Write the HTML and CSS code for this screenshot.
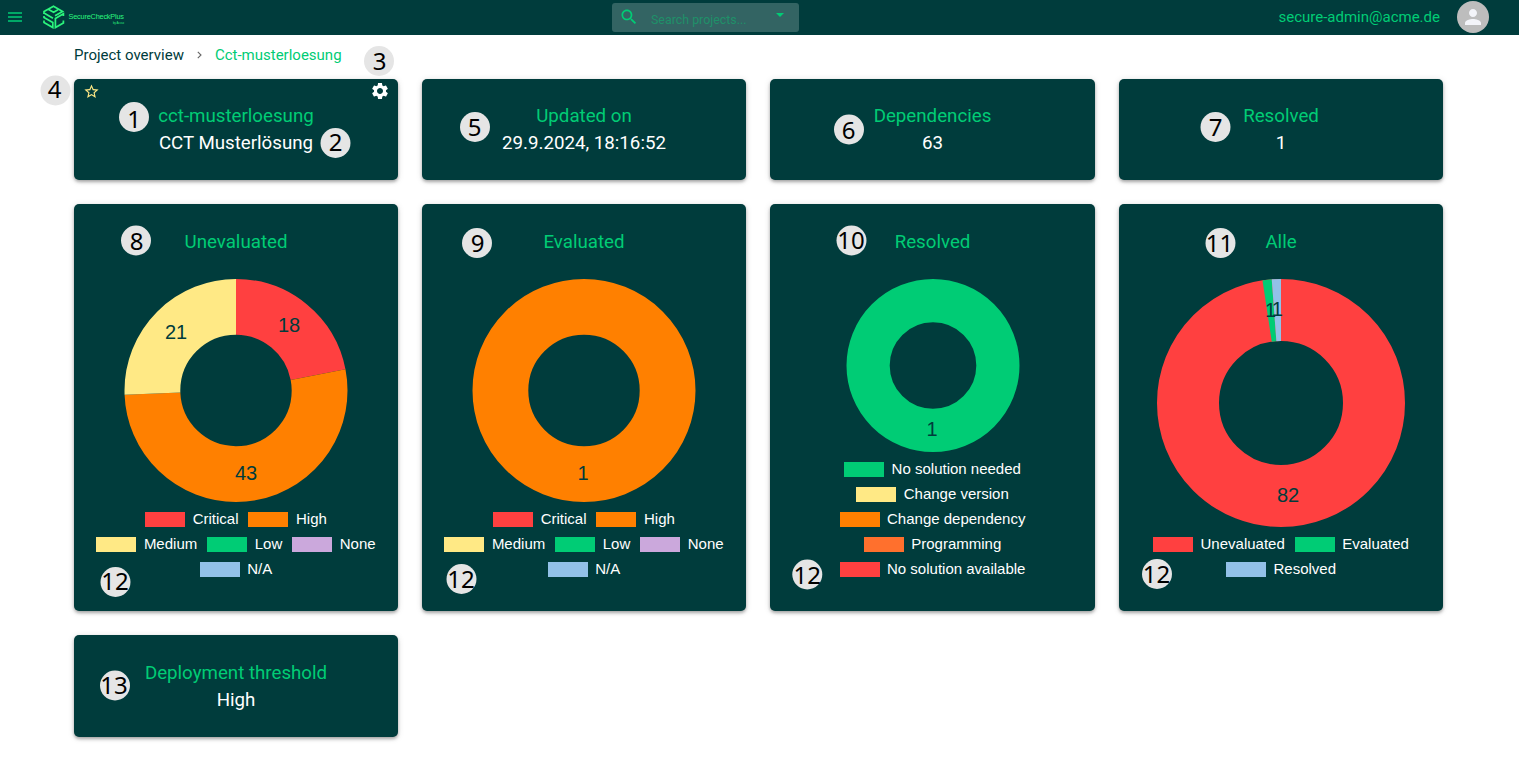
FILE: index.html
```
<!DOCTYPE html>
<html lang="en">
<head>
<meta charset="utf-8">
<title>SecureCheckPlus</title>
<link rel="stylesheet" href="styles.css">
</head>
<body>
<header class="topbar">
  <div class="brand">
    <svg class="menu" width="14" height="10" viewBox="0 0 14 10"><path d="M0 1h14M0 5h14M0 9h14" fill="none" stroke="#00cc75" stroke-width="1.3"/></svg>
    <svg class="logo" width="84" height="24" viewBox="0 0 84 24">
      <g fill="none" stroke="#2bf57c" stroke-width="1.7" stroke-linejoin="miter">
        <path d="M1 9V6.6L10.5 1.2 19.6 6.4 12 10.8M5.6 4.4l5 2.8 4.4-2.4"/>
        <path d="M1 8l9 5.2M1 11v1.6l8.8 5v5L1 17.6v-2.2"/>
        <path d="M20.4 11V8.8L12.4 13.4v9.2L20.4 18v-2.6"/>
      </g>
      <text class="logo-name" x="25.5" y="14.4" textLength="55.5">SecureCheckPlus</text>
      <text class="logo-by" x="70" y="19" textLength="11">by Accso</text>
    </svg>
  </div>
  <div class="search">
    <svg width="20" height="20" viewBox="0 0 24 24"><path fill="#00cc75" d="M15.5 14h-.79l-.28-.27C15.41 12.59 16 11.11 16 9.5 16 5.91 13.09 3 9.5 3S3 5.91 3 9.5 5.91 16 9.5 16c1.61 0 3.09-.59 4.23-1.57l.27.28v.79l5 4.99L20.49 19l-4.99-5zm-6 0C7.01 14 5 11.99 5 9.5S7.01 5 9.5 5 14 7.01 14 9.5 11.99 14 9.5 14z"/></svg>
    <span class="placeholder">Search projects...</span>
    <svg class="caret" width="8" height="4" viewBox="0 0 8 4"><path d="M0 0h8L4 4z" fill="#00cc75"/></svg>
  </div>
  <div class="user">
    <span class="mail">secure-admin@acme.de</span>
    <span class="avatar"><svg width="24" height="24" viewBox="0 0 24 24"><path fill="#f3f4f9" d="M12 12c2.21 0 4-1.79 4-4s-1.79-4-4-4-4 1.79-4 4 1.79 4 4 4zm0 2c-2.67 0-8 1.34-8 4v2h16v-2c0-2.66-5.33-4-8-4z"/></svg></span>
  </div>
</header>

<nav class="crumbs">
  <span class="crumb">Project overview</span>
  <svg width="5" height="8" viewBox="0 0 5 8"><path d="M.8.8L4 4 .8 7.2" fill="none" stroke="#666" stroke-width="1.1"/></svg>
  <span class="crumb current">Cct-musterloesung</span>
</nav>

<main class="grid">
  <section class="card project">
    <svg class="star" width="17" height="17" viewBox="0 0 24 24"><path fill="#ffe985" d="M22 9.24l-7.19-.62L12 2 9.19 8.63 2 9.24l5.46 4.73L5.82 21 12 17.27 18.18 21l-1.63-7.03L22 9.24zM12 15.4l-3.76 2.27 1-4.28-3.32-2.88 4.38-.38L12 6.1l1.71 4.04 4.38.38-3.32 2.88 1 4.28L12 15.4z"/></svg>
    <svg class="gear" width="20" height="20" viewBox="0 0 24 24"><path fill="#fff" d="M19.14 12.94c.04-.3.06-.61.06-.94 0-.32-.02-.64-.07-.94l2.03-1.58c.18-.14.23-.41.12-.61l-1.92-3.32c-.12-.22-.37-.29-.59-.22l-2.39.96c-.5-.38-1.03-.7-1.62-.94l-.36-2.54c-.04-.24-.24-.41-.48-.41h-3.84c-.24 0-.43.17-.47.41l-.36 2.54c-.59.24-1.13.57-1.62.94l-2.39-.96c-.22-.08-.47 0-.59.22L2.74 8.87c-.12.21-.08.47.12.61l2.03 1.58c-.05.3-.09.63-.09.94s.02.64.07.94l-2.03 1.58c-.18.14-.23.41-.12.61l1.92 3.32c.12.22.37.29.59.22l2.39-.96c.5.38 1.03.7 1.62.94l.36 2.54c.05.24.24.41.48.41h3.84c.24 0 .44-.17.47-.41l.36-2.54c.59-.24 1.13-.56 1.62-.94l2.39.96c.22.08.47 0 .59-.22l1.92-3.32c.12-.22.07-.47-.12-.61l-2.01-1.58zM12 15.6c-1.98 0-3.6-1.62-3.6-3.6s1.62-3.6 3.6-3.6 3.6 1.62 3.6 3.6-1.62 3.6-3.6 3.6z"/></svg>
    <h2>cct-musterloesung</h2><p>CCT Musterlösung</p>
  </section>
  <section class="card"><h2>Updated on</h2><p>29.9.2024, 18:16:52</p></section>
  <section class="card"><h2>Dependencies</h2><p>63</p></section>
  <section class="card"><h2>Resolved</h2><p>1</p></section>

  <section class="card chart">
    <h2>Unevaluated</h2>
    <svg width="276" height="223" viewBox="-138 -111.5 276 223">
      <g fill="none" stroke-width="55.8" transform="rotate(-90)">
        <circle r="83.6" pathLength="82" stroke="#ff4040" stroke-dasharray="18 64"/>
        <circle r="83.6" pathLength="82" stroke="#ff8000" stroke-dasharray="43 39" stroke-dashoffset="-18"/>
        <circle r="83.6" pathLength="82" stroke="#ffe985" stroke-dasharray="21 61" stroke-dashoffset="-61"/>
      </g>
      <text class="value" x="53" y="-58.5">18</text><text class="value" x="10" y="89.5">43</text><text class="value" x="-60" y="-51.5">21</text>
    </svg>
    <div class="legend">
      <div class="row"><span class="key critical">Critical</span><span class="key high">High</span></div>
      <div class="row"><span class="key medium">Medium</span><span class="key low">Low</span><span class="key none">None</span></div>
      <div class="row"><span class="key na">N/A</span></div>
    </div>
  </section>
  <section class="card chart">
    <h2>Evaluated</h2>
    <svg width="276" height="223" viewBox="-138 -111.5 276 223">
      <circle r="83.6" fill="none" stroke-width="55.8" stroke="#ff8000"/>
      <text class="value" x="-1" y="89.5">1</text>
    </svg>
    <div class="legend">
      <div class="row"><span class="key critical">Critical</span><span class="key high">High</span></div>
      <div class="row"><span class="key medium">Medium</span><span class="key low">Low</span><span class="key none">None</span></div>
      <div class="row"><span class="key na">N/A</span></div>
    </div>
  </section>
  <section class="card chart">
    <h2>Resolved</h2>
    <svg width="276" height="173" viewBox="-138 -86.5 276 173">
      <circle r="64.9" fill="none" stroke-width="43.2" stroke="#00cc75"/>
      <text class="value" x="-1" y="70.5">1</text>
    </svg>
    <div class="legend">
      <div class="row"><span class="key low">No solution needed</span></div>
      <div class="row"><span class="key medium">Change version</span></div>
      <div class="row"><span class="key high">Change dependency</span></div>
      <div class="row"><span class="key programming">Programming</span></div>
      <div class="row"><span class="key critical">No solution available</span></div>
    </div>
  </section>
  <section class="card chart">
    <h2>Alle</h2>
    <svg width="276" height="248" viewBox="-138 -124 276 248">
      <circle r="93" fill="none" stroke="#ff4040" stroke-width="62"/>
      <path d="M-18.48-122.61A124 124 0 0 1-9.27-123.65L-4.63-61.83A62 62 0 0 0-9.24-61.31z" fill="#00cc75"/>
      <path d="M-9.27-123.65A124 124 0 0 1 0-124V-62A62 62 0 0 0-4.63-61.83z" fill="#92c1e8"/>
      <text class="value" x="7" y="99">82</text><text class="value" x="-10.5" y="-86">1</text><text class="value" x="-3.8" y="-87">1</text>
    </svg>
    <div class="legend">
      <div class="row"><span class="key critical">Unevaluated</span><span class="key low">Evaluated</span></div>
      <div class="row"><span class="key na">Resolved</span></div>
    </div>
  </section>

  <section class="card threshold"><h2>Deployment threshold</h2><p>High</p></section>
</main>

<svg class="markers" width="1519" height="781" viewBox="0 0 1519 781">
  <circle cx="134" cy="117" r="15"/><text x="134" y="128.2">1</text>
  <circle cx="335.5" cy="143" r="15"/><text x="335.5" y="151.2">2</text>
  <circle cx="379" cy="61" r="15"/><text x="379.5" y="70.2">3</text>
  <circle cx="55.5" cy="90.5" r="15"/><text x="54.5" y="98">4</text>
  <circle cx="475" cy="127" r="15"/><text x="474.5" y="135.7">5</text>
  <circle cx="849" cy="129.5" r="15"/><text x="848.5" y="139">6</text>
  <circle cx="1215.5" cy="127" r="15"/><text x="1215.5" y="136">7</text>
  <circle cx="136" cy="240.5" r="15"/><text x="136.5" y="250">8</text>
  <circle cx="477" cy="243" r="15"/><text x="477.5" y="252">9</text>
  <circle cx="851.5" cy="240.5" r="15"/><text x="851" y="249">10</text>
  <circle cx="1220.5" cy="243" r="15"/><text x="1219.5" y="252">11</text>
  <circle cx="115.5" cy="582" r="15"/><text x="115" y="589.7">12</text>
  <circle cx="461.5" cy="579" r="15"/><text x="461" y="587.5">12</text>
  <circle cx="807.3" cy="574.5" r="15"/><text x="807.3" y="583.7">12</text>
  <circle cx="1157" cy="574" r="15"/><text x="1156.5" y="583">12</text>
  <circle cx="115" cy="685.5" r="15"/><text x="114" y="694">13</text>
</svg>
</body>
</html>
```
FILE: styles.css
```
* { box-sizing: border-box; }
body { margin: 0; position: relative; height: 781px; overflow: hidden; background: #fff; font-family: Roboto, "Liberation Sans", sans-serif; }
svg { display: block; flex: none; }
h2, p { margin: 0; font-size: 18.72px; font-weight: 400; line-height: 27px; }

.topbar { height: 35px; padding: 0 30px 0 8px; background: #003c3c; display: grid; grid-template-columns: 604px 187px 1fr; }
.brand { display: flex; align-items: center; gap: 21px; }
.menu { margin-top: -1px; }
.logo { margin-top: -1px; }
.logo-name { font: 7.3px "Liberation Sans", sans-serif; fill: #2bf57c; }
.logo-by { font: 2.8px "Liberation Sans", sans-serif; fill: #2bf57c; }
.search { height: 29px; margin-top: 3px; padding: 0 15px 0 7px; display: flex; align-items: center; background: #336463; border-radius: 3px; }
.search > svg:first-child { margin-top: -1px; }
.placeholder { flex: 1; margin: 3px 0 0 12px; font-size: 12.4px; color: #1f9069; }
.caret { margin-top: -5px; }
.user { height: 34px; display: flex; align-items: center; justify-content: flex-end; gap: 17px; }
.mail { font-size: 15px; color: #00cc75; }
.avatar { width: 32px; height: 32px; border-radius: 50%; background: #bdbdbd; display: flex; align-items: center; justify-content: center; }

.crumbs { height: 44px; padding: 0 0 4px 74px; display: flex; align-items: center; gap: 13px; font-size: 15px; color: #003c3c; }
.current { color: #00cc75; }

.grid { padding: 0 76px 0 74px; display: grid; grid-template-columns: 324px 324px 325px 324px; grid-template-rows: 101px 407px 102px; gap: 24px; }
.card { position: relative; padding: 24px 20px; border-radius: 5px; background: #003c3c; color: #fff; text-align: center; box-shadow: 0 2px 4px -1px rgba(0,0,0,.22), 0 2px 3px rgba(0,0,0,.16), 0 1px 7px rgba(0,0,0,.12); }
.card h2 { color: #00cc75; }
.star { position: absolute; left: 9px; top: 4px; }
.gear { position: absolute; right: 8px; top: 2px; }
.threshold, .chart { padding-top: 25px; }
.chart { display: flex; flex-direction: column; align-items: center; }
.chart > svg { margin-top: 23px; }
.value { font: 20px "Liberation Sans", sans-serif; fill: #003c3c; text-anchor: middle; }

.legend { margin-top: 4px; }
.row { height: 25px; display: flex; align-items: center; justify-content: center; gap: 10px; }
.key { display: flex; align-items: center; gap: 7.5px; height: 25px; font: 15px/23px "Liberation Sans", sans-serif; white-space: nowrap; }
.key::before { content: ""; width: 40px; height: 15px; margin-top: 1px; background: var(--tone); }
.critical { --tone: #ff4040; }
.high { --tone: #ff8000; }
.medium { --tone: #ffe985; }
.low { --tone: #00cc75; }
.none { --tone: #cba8dc; }
.na { --tone: #92c1e8; }
.programming { --tone: #ff702d; }

.markers { position: absolute; left: 0; top: 0; fill: #e5e5e5; }
.markers text { font: 24px "Noto Sans", sans-serif; fill: #000; text-anchor: middle; }
```
